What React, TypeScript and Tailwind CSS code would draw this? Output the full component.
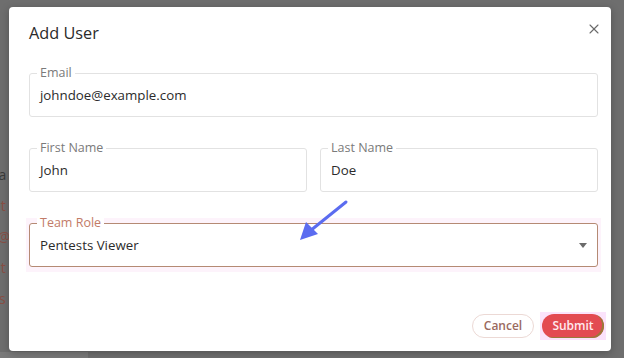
import { X } from 'lucide-react'

const font = { fontFamily: '"Open Sans", "Liberation Sans", sans-serif' }

const OutlinedField = ({
  label,
  value,
  active,
  select,
}: {
  label: string
  value: string
  active?: boolean
  select?: boolean
}) => (
  <div
    className={`relative flex h-[44px] items-center rounded-[3px] border bg-white px-[10px] ${
      active ? 'border-[#b58a74]' : 'border-[#e2e2e2]'
    }`}
  >
    <label
      className={`absolute -top-[8px] left-[7px] bg-white px-[3px] text-[12.5px] leading-[14px] ${
        active ? 'text-[#c27b68]' : 'text-[#7a7a7a]'
      }`}
    >
      {label}
    </label>
    <span className="pt-[1px] text-[13.3px] text-[#2b2b2b]">{value}</span>
    {select && (
      <svg className="absolute right-[10px] top-[19px]" width="8" height="5" viewBox="0 0 8 5">
        <path d="M0 0h8L4 5z" fill="#6b6b6b" />
      </svg>
    )}
  </div>
)

export default function App() {
  return (
    <div className="relative h-[358px] w-[624px] overflow-hidden bg-[#6e6e6e]" style={font}>
      {/* page behind the overlay */}
      <div className="flex flex-col gap-[10px] pt-[164px] text-[14px] leading-[21px] text-[#8a4f45]">
        <span className="-ml-[10px] text-[#3a3a3a]">na</span>
        <span className="-ml-[6px]">st</span>
        <span className="-ml-[8px]">r@</span>
        <span className="-ml-[6px]">st</span>
        <span className="-ml-[8px]">vs</span>
      </div>
      <div className="absolute bottom-0 left-0 h-[6px] w-[88px] bg-[#7a7a7a]" />

      <div className="absolute left-[9px] top-[7px] flex h-[344px] w-[602px] flex-col rounded-[4px] bg-white shadow-[0_2px_8px_rgba(0,0,0,0.25)]">
        <div className="flex items-start justify-between pl-[20px] pr-[9px] pt-[14px]">
          <h2 className="text-[16.3px] leading-[24px] text-[#2a2a2a]">Add User</h2>
          <X size={16} strokeWidth={1.6} className="text-[#6a6a6a]" />
        </div>

        <div className="mt-[28px] flex flex-col gap-[31px] pl-[20px] pr-[13px]">
          <OutlinedField label="Email" value="johndoe@example.com" />
          <div className="grid grid-cols-2 gap-[13px]">
            <OutlinedField label="First Name" value="John" />
            <OutlinedField label="Last Name" value="Doe" />
          </div>
          <div className="-mx-[3px] -my-[5px] bg-[#fdf3fb] px-[3px] py-[5px]">
            <OutlinedField label="Team Role" value="Pentests Viewer" active select />
          </div>
        </div>

        <div className="mt-auto flex items-center justify-end gap-[6px] pb-[11px] pr-[5px]">
          <button className="h-[24px] w-[62px] rounded-full border border-[#ecd9d5] text-[12px] font-semibold text-[#9a6a60]">
            Cancel
          </button>
          <div className="bg-[#fbe3fb] p-[2px]">
            <button className="block h-[24px] w-[62px] rounded-full bg-[#e34b52] text-[12px] font-semibold text-[#ffe9ef] shadow-[inset_-2px_-1px_0_#9a7a3a]">
              Submit
            </button>
          </div>
        </div>
      </div>

      {/* annotation arrow */}
      <svg className="absolute left-[296px] top-[198px]" width="56" height="46" viewBox="0 0 56 46">
        <path d="M50 4 L14 33" stroke="#5b6cf0" strokeWidth="3" strokeLinecap="round" />
        <path d="M4 42 L10 24 L22 36 Z" fill="#5b6cf0" />
      </svg>
    </div>
  )
}
